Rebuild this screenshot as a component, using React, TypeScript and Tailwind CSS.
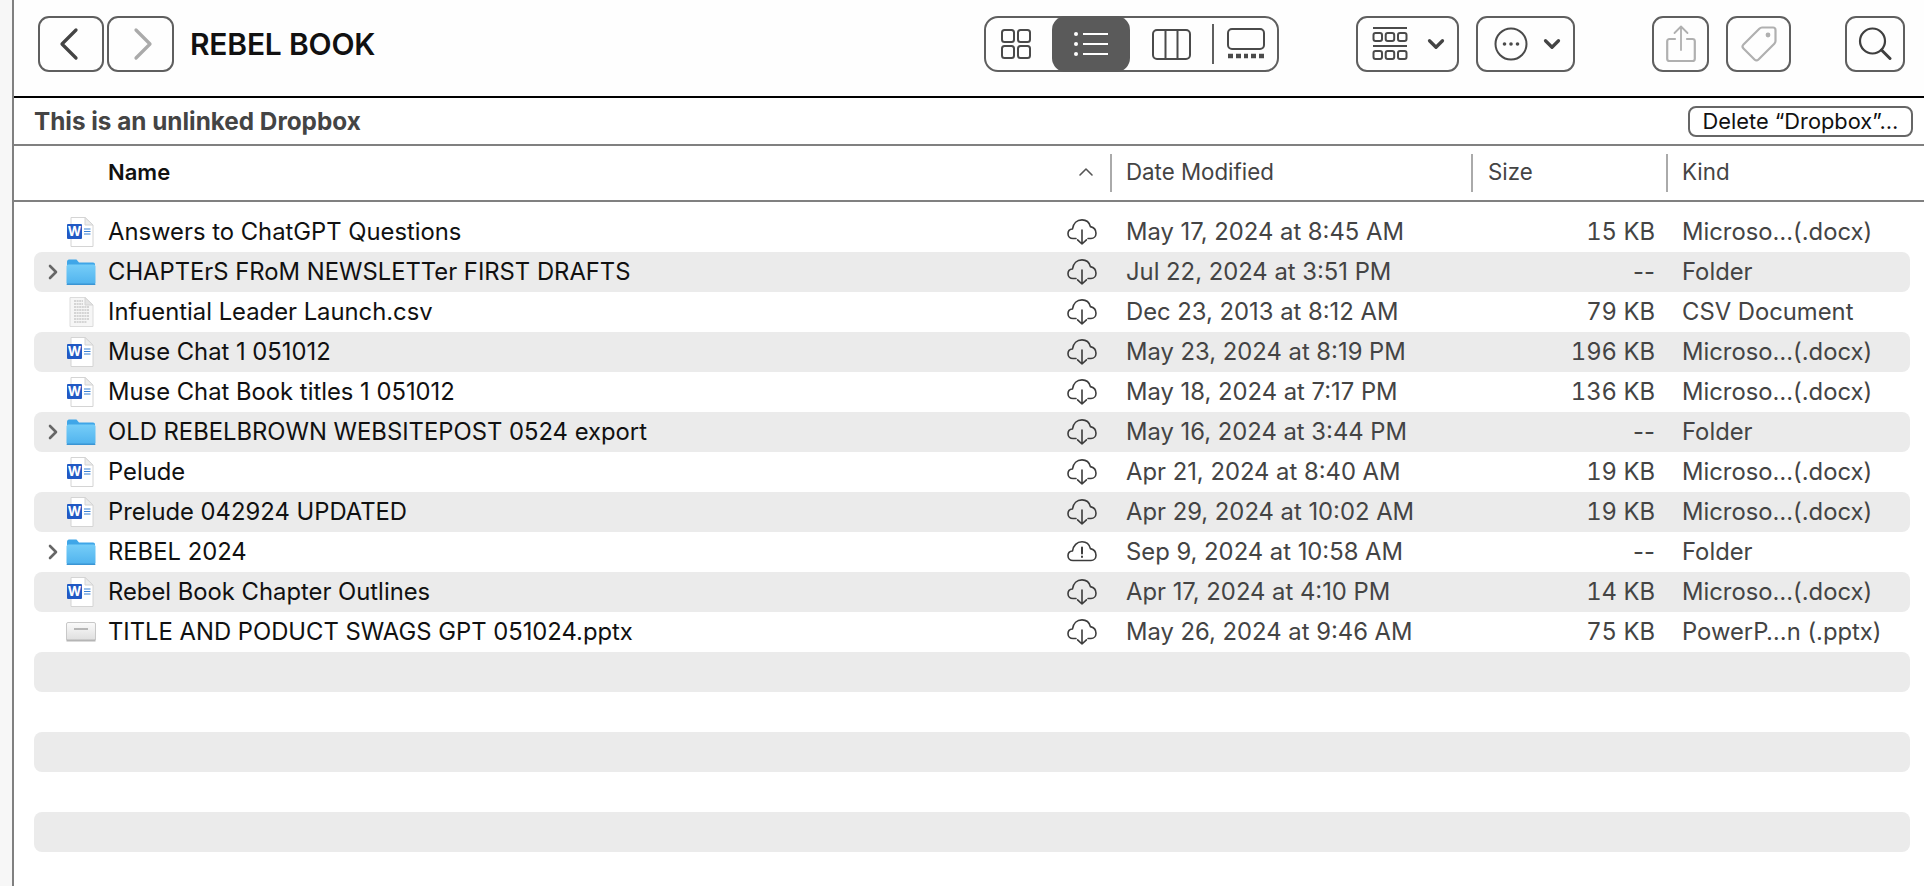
import { ChevronLeft, ChevronRight, ChevronDown, ChevronUp } from 'lucide-react';
import type { ReactNode } from 'react';

type RowKind = 'word' | 'folder' | 'csv' | 'pptx';

interface FileRow {
    name: string;
    type: RowKind;
    date: string;
    size: string;
    kind: string;
    alert?: boolean;
}

const files: FileRow[] = [
    { name: 'Answers to ChatGPT Questions', type: 'word', date: 'May 17, 2024 at 8:45 AM', size: '15 KB', kind: 'Microso…(.docx)' },
    { name: 'CHAPTErS FRoM NEWSLETTer FIRST DRAFTS', type: 'folder', date: 'Jul 22, 2024 at 3:51 PM', size: '--', kind: 'Folder' },
    { name: 'Infuential Leader Launch.csv', type: 'csv', date: 'Dec 23, 2013 at 8:12 AM', size: '79 KB', kind: 'CSV Document' },
    { name: 'Muse Chat 1 051012', type: 'word', date: 'May 23, 2024 at 8:19 PM', size: '196 KB', kind: 'Microso…(.docx)' },
    { name: 'Muse Chat Book titles 1 051012', type: 'word', date: 'May 18, 2024 at 7:17 PM', size: '136 KB', kind: 'Microso…(.docx)' },
    { name: 'OLD REBELBROWN WEBSITEPOST 0524 export', type: 'folder', date: 'May 16, 2024 at 3:44 PM', size: '--', kind: 'Folder' },
    { name: 'Pelude', type: 'word', date: 'Apr 21, 2024 at 8:40 AM', size: '19 KB', kind: 'Microso…(.docx)' },
    { name: 'Prelude 042924 UPDATED', type: 'word', date: 'Apr 29, 2024 at 10:02 AM', size: '19 KB', kind: 'Microso…(.docx)' },
    { name: 'REBEL 2024', type: 'folder', date: 'Sep 9, 2024 at 10:58 AM', size: '--', kind: 'Folder', alert: true },
    { name: 'Rebel Book Chapter Outlines', type: 'word', date: 'Apr 17, 2024 at 4:10 PM', size: '14 KB', kind: 'Microso…(.docx)' },
    { name: 'TITLE AND PODUCT SWAGS GPT 051024.pptx', type: 'pptx', date: 'May 26, 2024 at 9:46 AM', size: '75 KB', kind: 'PowerP…n (.pptx)' },
];

function CloudIcon({ alert }: { alert?: boolean }) {
    if (alert) {
        return (
            <svg width="30" height="26" viewBox="0 0 30 26" fill="none" stroke="#3c3c3c" strokeWidth="1.6" strokeLinecap="round" strokeLinejoin="round">
                <path d="M6 21.5C3 21.5 1 19.4 1 16.8C1 14.2 2.9 12.2 5.5 12C6.2 6.5 10 2.8 15 2.8C19.4 2.8 22.4 5.6 23.4 9.6C26.6 10.4 29 12.8 29 16.2C29 19.3 26.8 21.5 24 21.5Z" />
                <path d="M15 8.5V14.5M15 17.6V18" strokeWidth="2" />
            </svg>
        );
    }
    return (
        <svg width="30" height="26" viewBox="0 0 30 26" fill="none" stroke="#3c3c3c" strokeWidth="1.6" strokeLinecap="round" strokeLinejoin="round">
            <path d="M9 19.5H6C3 19.5 1 17.4 1 14.8C1 12.2 2.9 10.2 5.5 10C6.2 4.5 10 0.9 15 0.9C19.4 0.9 22.4 3.6 23.4 7.6C26.6 8.4 29 10.8 29 14.2C29 17.3 26.8 19.5 24 19.5H21" />
            <path d="M15 11V25M10.6 20.8L15 25L19.4 20.8" />
        </svg>
    );
}

function WordIcon() {
    return (
        <svg width="28" height="30" viewBox="0 0 28 30">
            <path d="M4 .5H18L26 8V29.5H4Z" fill="#fff" stroke="#d4d4d4" />
            <path d="M18 .5V8H26Z" fill="#ececec" stroke="#d4d4d4" />
            <rect x="0" y="7" width="15" height="15" rx="1" fill="#2159c4" />
            <text x="7.5" y="19" textAnchor="middle" fontSize="13" fontWeight="700" fill="#fff" fontFamily="Inter, sans-serif">W</text>
            <path d="M17 12H23.5M17 14.5H23.5M17 17H23.5" stroke="#3b82d6" strokeWidth="1.2" />
        </svg>
    );
}

function FolderIcon() {
    return (
        <svg width="30" height="28" viewBox="0 0 30 28">
            <defs>
                <linearGradient id="folderFront" x1="0" y1="0" x2="0" y2="1">
                    <stop offset="0" stopColor="#76cdf8" />
                    <stop offset="1" stopColor="#50b3ee" />
                </linearGradient>
            </defs>
            <path d="M1 4C1 2.6 1.8 1.5 3 1.5H10.5L13 4.5H27C28.4 4.5 29 5.3 29 6.5V10H1Z" fill="#3fa6e8" />
            <rect x="0.5" y="6.5" width="29" height="20" rx="2" fill="url(#folderFront)" />
            <rect x="0.5" y="25.5" width="29" height="1.5" rx="0.7" fill="#3b95d4" />
        </svg>
    );
}

function CsvIcon() {
    return (
        <svg width="26" height="30" viewBox="0 0 26 30">
            <path d="M2 .5H17L25 8V29.5H2Z" fill="#f6f6f6" stroke="#dcdcdc" />
            <path d="M17 .5V8H25Z" fill="#e4e4e4" stroke="#d4d4d4" />
            <path d="M6 4H15M6 7H15M6 10H21M6 13H21M6 16H21M6 19H21M6 22H21M6 25H19" stroke="#b4b4b4" strokeWidth="1.2" strokeDasharray="2 .6" />
        </svg>
    );
}

function PptxIcon() {
    return (
        <svg width="30" height="20" viewBox="0 0 30 20">
            <defs>
                <linearGradient id="slideFace" x1="0" y1="0" x2="0" y2="1">
                    <stop offset="0" stopColor="#fbfbfb" />
                    <stop offset="1" stopColor="#dedede" />
                </linearGradient>
            </defs>
            <rect x="0.5" y="0.5" width="29" height="18" rx="1.5" fill="url(#slideFace)" stroke="#c8c8c8" />
            <path d="M8 7H22" stroke="#8f8f8f" strokeWidth="1.2" />
            <rect x="0.5" y="17.5" width="29" height="2" fill="#b5b5b5" />
        </svg>
    );
}

function FileIcon({ type }: { type: RowKind }) {
    if (type === 'word') return <WordIcon />;
    if (type === 'folder') return <FolderIcon />;
    if (type === 'csv') return <CsvIcon />;
    return <PptxIcon />;
}

function ToolButton({ className, children }: { className: string; children: ReactNode }) {
    return (
        <div className={`flex h-[56px] shrink-0 items-center justify-center rounded-[11px] border-2 border-[#5f5f5f] ${className}`}>
            {children}
        </div>
    );
}

const rowGrid = 'mr-[14px] ml-5 grid h-10 grid-cols-[74px_959px_59px_354px_175px_1fr] items-center rounded-lg';

export default function App() {
    return (
        <div className="flex h-[886px] w-full overflow-hidden bg-white font-['Inter','Noto_Sans',sans-serif]">
            <div className="w-[14px] shrink-0 border-r-2 border-[#808080] bg-[#f7f7f7]" />

            <div className="flex min-w-0 flex-1 flex-col">
                {/* Toolbar */}
                <div className="flex h-[98px] shrink-0 items-start border-b-2 border-black bg-[#fefefe] pt-4">
                    <ToolButton className="ml-6 w-[66px]">
                        <ChevronLeft size={56} strokeWidth={1.4} className="-ml-1 text-[#444]" />
                    </ToolButton>
                    <ToolButton className="ml-[3px] w-[67px]">
                        <ChevronRight size={56} strokeWidth={1.4} className="ml-1 text-[#aaa]" />
                    </ToolButton>
                    <h1 className="ml-4 w-[794px] text-[30px] leading-[56px] font-semibold tracking-[-0.2px] text-[#111]">REBEL BOOK</h1>

                    <div className="flex h-[56px] w-[295px] shrink-0 items-center rounded-[14px] border-2 border-[#5f5f5f]">
                        <div className="flex w-[66px] justify-center pr-1.5">
                            <svg width="32" height="32" viewBox="0 0 32 32" fill="none" stroke="#4a4a4a" strokeWidth="2">
                                <rect x="2" y="2" width="12" height="12" rx="2.5" />
                                <rect x="18" y="2" width="12" height="12" rx="2.5" />
                                <rect x="2" y="18" width="12" height="12" rx="2.5" />
                                <rect x="18" y="18" width="12" height="12" rx="2.5" />
                            </svg>
                        </div>
                        <div className="-my-0.5 flex h-[56px] w-[78px] items-center justify-center rounded-[14px] bg-[#5a5a5a]">
                            <svg width="36" height="30" viewBox="0 0 36 30" fill="none" stroke="#fff" strokeWidth="2">
                                <path d="M10 5H35M10 15H35M10 25H35" />
                                <circle cx="3" cy="5" r="2" fill="#fff" stroke="none" />
                                <circle cx="3" cy="15" r="2" fill="#fff" stroke="none" />
                                <circle cx="3" cy="25" r="2" fill="#fff" stroke="none" />
                            </svg>
                        </div>
                        <div className="flex w-[82px] justify-center">
                            <svg width="39" height="31" viewBox="0 0 39 31" fill="none" stroke="#4a4a4a" strokeWidth="2">
                                <rect x="1" y="1" width="37" height="29" rx="4" />
                                <path d="M13.5 1V30M25.5 1V30" />
                            </svg>
                        </div>
                        <div className="h-10 w-0.5 bg-[#5f5f5f]" />
                        <div className="flex flex-1 justify-center">
                            <svg width="38" height="32" viewBox="0 0 38 32" fill="none" stroke="#4a4a4a" strokeWidth="2">
                                <rect x="1" y="1" width="36" height="20" rx="4" />
                                <path d="M1 28H6M9 28H14M17 28H21M24 28H29M32 28H37" strokeWidth="4.5" />
                            </svg>
                        </div>
                    </div>

                    <ToolButton className="ml-[77px] w-[103px] gap-[15px] pl-1.5">
                        <svg width="36" height="36" viewBox="0 0 36 36" fill="none" stroke="#4a4a4a" strokeWidth="2">
                            <path d="M1 2H35M1 20H35" />
                            <rect x="1.5" y="7" width="8.5" height="8" rx="2" />
                            <rect x="13.7" y="7" width="8.5" height="8" rx="2" />
                            <rect x="26" y="7" width="8.5" height="8" rx="2" />
                            <rect x="1.5" y="25" width="8.5" height="8" rx="2" />
                            <rect x="13.7" y="25" width="8.5" height="8" rx="2" />
                            <rect x="26" y="25" width="8.5" height="8" rx="2" />
                        </svg>
                        <ChevronDown size={26} strokeWidth={3} className="text-[#444]" />
                    </ToolButton>
                    <ToolButton className="ml-[17px] w-[99px] gap-[11px] pl-2">
                        <svg width="34" height="34" viewBox="0 0 34 34" fill="none" stroke="#4a4a4a" strokeWidth="2">
                            <circle cx="17" cy="17" r="15.5" />
                            <circle cx="10.5" cy="17" r="1.8" fill="#4a4a4a" stroke="none" />
                            <circle cx="17" cy="17" r="1.8" fill="#4a4a4a" stroke="none" />
                            <circle cx="23.5" cy="17" r="1.8" fill="#4a4a4a" stroke="none" />
                        </svg>
                        <ChevronDown size={26} strokeWidth={3} className="text-[#444]" />
                    </ToolButton>

                    <ToolButton className="ml-[77px] w-[57px]">
                        <svg width="30" height="38" viewBox="0 0 30 38" fill="none" stroke="#b0b0b0" strokeWidth="2.2" strokeLinejoin="round" strokeLinecap="round">
                            <path d="M9 14H3.5C2 14 1.2 15 1.2 16.3V33.7C1.2 35 2 36 3.5 36H26.5C28 36 28.8 35 28.8 33.7V16.3C28.8 15 28 14 26.5 14H21" />
                            <path d="M15 25V2M8.5 8L15 1.5L21.5 8" strokeWidth="1.8" />
                        </svg>
                    </ToolButton>
                    <ToolButton className="ml-[17px] w-[65px]">
                        <svg width="38" height="38" viewBox="0 0 38 38" fill="none" stroke="#b0b0b0" strokeWidth="2.2" strokeLinejoin="round">
                            <path d="M22 2.5H33C34.5 2.5 35.5 3.5 35.5 5V16C35.5 17 35 18 34.3 18.7L18.5 34.5C17.3 35.7 15.7 35.7 14.5 34.5L3.5 23.5C2.3 22.3 2.3 20.7 3.5 19.5L19.3 3.7C20 3 21 2.5 22 2.5Z" />
                            <circle cx="28" cy="10" r="2.4" fill="#b0b0b0" stroke="none" />
                        </svg>
                    </ToolButton>
                    <ToolButton className="ml-[54px] w-[60px]">
                        <svg width="34" height="34" viewBox="0 0 34 34" fill="none" stroke="#3f3f3f" strokeWidth="2.2" strokeLinecap="round">
                            <circle cx="14.5" cy="14" r="12.5" />
                            <path d="M23.5 23L32 31.5" strokeWidth="3" />
                        </svg>
                    </ToolButton>
                </div>

                {/* Unlinked banner */}
                <div className="flex h-12 shrink-0 items-center justify-between border-b-2 border-[#808080] pr-[11px] pl-5">
                    <span className="text-[24.3px] font-bold text-[#444]">This is an unlinked Dropbox</span>
                    <div className="flex h-[31px] w-[225px] items-center justify-center rounded-lg border-2 border-[#666] text-[21.8px] text-[#111]">
                        Delete “Dropbox”…
                    </div>
                </div>

                {/* Column headers */}
                <div className="flex h-[56px] shrink-0 items-center border-b-2 border-[#808080] text-[22.3px] text-[#444]">
                    <div className="flex h-[38px] w-[1096px] shrink-0 items-center justify-between pr-3 pb-[2px] pl-[94px]">
                        <span className="text-[22px] font-semibold text-[#111]">Name</span>
                        <ChevronUp size={24} strokeWidth={1.6} className="text-[#555]" />
                    </div>
                    <div className="flex h-[38px] w-[361px] shrink-0 items-center border-l-2 border-[#aaa] pb-[2px] pl-[14px]">Date Modified</div>
                    <div className="flex h-[38px] w-[195px] shrink-0 items-center border-l-2 border-[#aaa] pb-[2px] pl-[15px]">Size</div>
                    <div className="flex h-[38px] flex-1 items-center border-l-2 border-[#aaa] pb-[2px] pl-[14px]">Kind</div>
                </div>

                {/* File list */}
                <div className="flex-1 overflow-hidden pt-[10px] text-[23.8px] text-[#444]">
                    {files.map((file, i) => (
                        <div key={file.name} className={`${rowGrid} ${i % 2 === 1 ? 'bg-[#ebebeb]' : ''}`}>
                            <div className="flex items-center">
                                <div className="flex w-[32px] justify-end pr-[1px]">
                                    {file.type === 'folder' && <ChevronRight size={24} strokeWidth={2.6} className="text-[#666]" />}
                                </div>
                                <div className="flex w-[30px] justify-center">
                                    <FileIcon type={file.type} />
                                </div>
                            </div>
                            <span className="truncate text-[#111]">{file.name}</span>
                            <CloudIcon alert={file.alert} />
                            <span className="truncate">{file.date}</span>
                            <span className={`text-right ${file.size === '--' ? '' : 'tabular-nums'}`}>{file.size}</span>
                            <span className="truncate pl-[27px]">{file.kind}</span>
                        </div>
                    ))}
                    {/* Empty stripes continue below the last file */}
                    <div className="mr-[14px] ml-5 h-10 rounded-lg bg-[#ebebeb]" />
                    <div className="h-10" />
                    <div className="mr-[14px] ml-5 h-10 rounded-lg bg-[#ebebeb]" />
                    <div className="h-10" />
                    <div className="mr-[14px] ml-5 h-10 rounded-lg bg-[#ebebeb]" />
                </div>
            </div>
        </div>
    );
}
